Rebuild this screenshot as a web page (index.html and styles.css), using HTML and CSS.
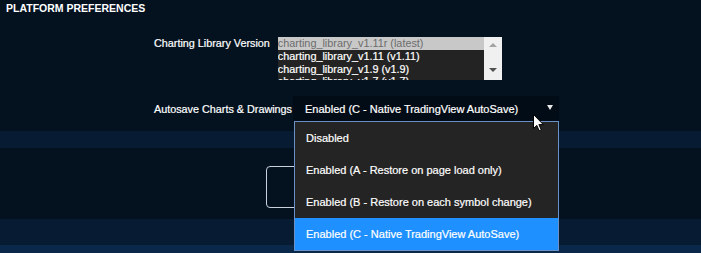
FILE: index.html
```html
<!DOCTYPE html>
<html lang="en">
<head>
<meta charset="utf-8">
<title>Platform Preferences</title>
<link rel="stylesheet" href="styles.css">
</head>
<body>
<div class="page">
  <div class="title">PLATFORM PREFERENCES</div>
  <div class="form">
    <div class="row row-version">
      <label class="label">Charting Library Version</label>
      <div class="listbox">
        <ul class="options">
          <li class="opt selected">charting_library_v1.11r (latest)</li>
          <li class="opt">charting_library_v1.11 (v1.11)</li>
          <li class="opt">charting_library_v1.9 (v1.9)</li>
          <li class="opt">charting_library_v1.7 (v1.7)</li>
        </ul>
        <div class="scrollbar">
          <span class="arrow-up"></span>
          <span class="arrow-down"></span>
        </div>
      </div>
    </div>
    <div class="row row-autosave">
      <label class="label">Autosave Charts &amp; Drawings</label>
      <div class="select-wrap">
        <div class="select">
          <span class="select-value">Enabled (C - Native TradingView AutoSave)</span>
          <span class="select-caret"></span>
        </div>
        <ul class="dropdown">
          <li class="dd-opt">Disabled</li>
          <li class="dd-opt">Enabled (A - Restore on page load only)</li>
          <li class="dd-opt">Enabled (B - Restore on each symbol change)</li>
          <li class="dd-opt active">Enabled (C - Native TradingView AutoSave)</li>
        </ul>
        <svg class="cursor" width="12" height="18" viewBox="0 0 12 18" aria-hidden="true">
          <path d="M0.5 0.5 L0.5 14.5 L3.8 11.4 L6.2 16.8 L8.3 15.9 L5.9 10.6 L10.3 10.6 Z" fill="#ffffff" stroke="#000000" stroke-width="1" stroke-linejoin="miter"/>
        </svg>
      </div>
    </div>
  </div>
  <div class="band"></div>
  <div class="actions">
    <button class="btn" type="button"></button>
  </div>
  <div class="band band-tall"></div>
  <div class="footer"></div>
</div>
</body>
</html>
```
FILE: styles.css
```css
* { box-sizing: border-box; }

html, body {
  margin: 0;
  padding: 0;
  background: #04121f;
}

body {
  font-family: "Liberation Sans", Arial, sans-serif;
  font-size: 11px;
  color: #ffffff;
  overflow: hidden;
  -webkit-text-stroke: 0.2px currentColor;
}

.page {
  width: 701px;
  height: 253px;
  overflow: hidden;
}

.title {
  margin-top: 1px;
  height: 14px;
  line-height: 14px;
  padding-left: 6px;
  font-weight: bold;
  font-size: 10.5px;
  color: #ffffff;
  -webkit-text-stroke: 0;
}

.form {
  padding: 22px 0 9px 154px;
  display: flex;
  flex-direction: column;
  gap: 16px;
}

.row {
  display: flex;
}

.label {
  font-size: 10.8px;
  line-height: 13px;
  white-space: nowrap;
}

.row-version {
  align-items: flex-start;
  gap: 8px;
}

.row-autosave {
  align-items: center;
  gap: 1px;
}

/* list box */
.listbox {
  display: flex;
  width: 224px;
  height: 43px;
  overflow: hidden;
}

.options {
  list-style: none;
  margin: 0;
  padding: 0;
  width: 206px;
  height: 43px;
  background: #232323;
  overflow: hidden;
  font-size: 10.85px;
}

.opt {
  height: 12.6px;
  line-height: 12.6px;
  white-space: nowrap;
  color: #ffffff;
}

.opt.selected {
  height: 13px;
  line-height: 13px;
  background: #c8c8c8;
  color: #6c6c6c;
  -webkit-text-stroke: 0;
}

.scrollbar {
  width: 18px;
  height: 43px;
  background: #f0f0f0;
  display: flex;
  flex-direction: column;
  align-items: center;
  justify-content: space-between;
  padding: 6px 0 8px;
}

.arrow-up {
  width: 0;
  height: 0;
  border-left: 4px solid transparent;
  border-right: 4px solid transparent;
  border-bottom: 4px solid #a3a3a3;
}

.arrow-down {
  width: 0;
  height: 0;
  border-left: 4px solid transparent;
  border-right: 4px solid transparent;
  border-top: 4px solid #505050;
}

/* select */
.select-wrap {
  position: relative;
}

.select {
  width: 266px;
  height: 26px;
  background: #020c16;
  display: flex;
  align-items: center;
  justify-content: space-between;
  padding: 0 6px 0 12px;
}

.select-value {
  white-space: nowrap;
}

.select-caret {
  width: 0;
  height: 0;
  border-left: 3px solid transparent;
  border-right: 3px solid transparent;
  border-top: 5px solid #e8e8e8;
  margin-top: -3px;
}

.dropdown {
  position: absolute;
  top: 25px;
  left: 1px;
  width: 265px;
  margin: 0;
  padding: 0;
  list-style: none;
  background: #242424;
  border: 1px solid #6b8fc7;
  z-index: 5;
}

.dd-opt {
  height: 32px;
  line-height: 32px;
  padding-left: 11px;
  white-space: nowrap;
  color: #ffffff;
}

.dd-opt.active {
  background: #1e90ff;
}

.cursor {
  position: absolute;
  left: 240px;
  top: 18px;
  z-index: 6;
}

/* page bands */
.band {
  height: 17px;
  background: #071b33;
}

.band-tall {
  height: 26px;
}

.actions {
  padding: 18px 0 11px 266px;
}

.btn {
  display: block;
  width: 130px;
  height: 42px;
  background: transparent;
  border: 1px solid #c9d1dc;
  border-radius: 4px;
  padding: 0;
}

.footer {
  height: 8px;
  background: #0a2849;
}
```
